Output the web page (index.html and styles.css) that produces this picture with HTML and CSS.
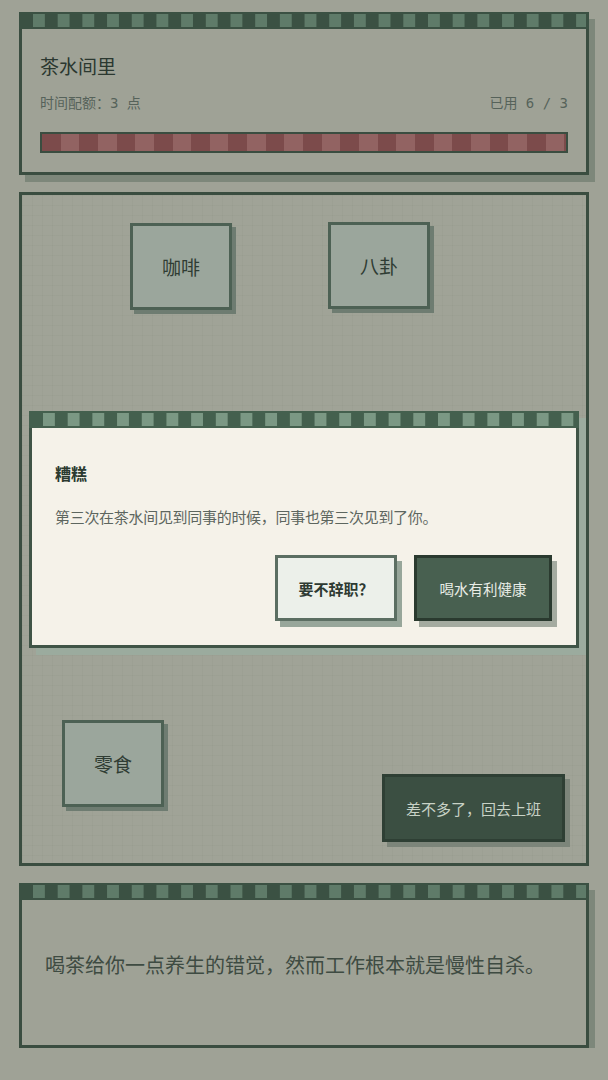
FILE: index.html
```html
<!DOCTYPE html>
<html lang="zh-CN">
<head>
  <meta charset="UTF-8">
  <title>茶水间里</title>
  <link rel="stylesheet" href="styles.css">
</head>
<body>
  <main class="screen">

    <!-- header: room name + time budget -->
    <section class="panel panel-head">
      <div class="strip"></div>
      <div class="panel-body">
        <h1 class="room-title">茶水间里</h1>
        <div class="meta">
          <span>时间配额：3 点</span>
          <span>已用 6 / 3</span>
        </div>
        <div class="meter"></div>
      </div>
    </section>

    <!-- the room itself: things to click are placed around the floor -->
    <section class="room">
      <button class="spot spot-coffee">咖啡</button>
      <button class="spot spot-gossip">八卦</button>
      <button class="spot spot-snack">零食</button>
      <button class="leave">差不多了，回去上班</button>

      <div class="dialog">
        <div class="strip strip-light"></div>
        <div class="dialog-body">
          <h2 class="dialog-title">糟糕</h2>
          <p class="dialog-text">第三次在茶水间见到同事的时候，同事也第三次见到了你。</p>
          <div class="dialog-actions">
            <button class="btn btn-plain">要不辞职？</button>
            <button class="btn btn-dark">喝水有利健康</button>
          </div>
        </div>
      </div>
    </section>

    <!-- narration -->
    <section class="panel panel-foot">
      <div class="strip"></div>
      <p class="narration">喝茶给你一点养生的错觉，然而工作根本就是慢性自杀。</p>
    </section>

  </main>
</body>
</html>
```

FILE: styles.css
```css
:root {
  --bg: #9fa296;
  --ink: #2f3c33;
  --frame: #3a4d40;
  --strip-dark: #3b5143;
  --strip-sq: #5f7b69;
}

* {
  box-sizing: border-box;
}

body {
  margin: 0;
  background: var(--bg);
  font-family: "Noto Sans CJK SC", sans-serif;
  color: var(--ink);
}

.screen {
  width: 608px;
  padding: 12px 19px 0;
  display: flex;
  flex-direction: column;
  gap: 17px;
}

/* framed panels with the film-strip top */
.panel {
  border: 3px solid var(--frame);
  border-top: none;
  background: var(--bg);
  box-shadow: 6px 7px 0 #7d877a;
}

/* squares start 14px in; the content box keeps them off the left edge */
.strip {
  height: 17px;
  margin: 0 -3px;
  padding: 0 3px 0 14px;
  background:
    linear-gradient(90deg, var(--strip-sq) 0 12px, transparent 12px) 0 2px / 24.7px 13px repeat-x content-box,
    var(--strip-dark);
}

.strip-light {
  background:
    linear-gradient(90deg, #7b9884 0 12px, transparent 12px) 0 2px / 24.7px 13px repeat-x content-box,
    #44604e;
}

.panel-body {
  padding: 24px 18px 19px;
}

.room-title {
  margin: 0;
  font-size: 19px;
  line-height: 26px;
  font-weight: normal;
  color: #2b3830;
}

.meta {
  margin-top: 14px;
  display: flex;
  justify-content: space-between;
  font-family: "DejaVu Sans Mono", "Noto Sans CJK SC", monospace;
  font-size: 14px;
  line-height: 20px;
  color: #56625a;
}

.meter {
  margin-top: 19px;
  height: 21px;
  border: 2px solid var(--frame);
  background: repeating-linear-gradient(90deg, #7c4b4b 0 18.6px, #926362 18.6px 37.3px);
}

/* the room floor */
.room {
  position: relative;
  height: 674px;
  border: 3px solid var(--frame);
  background-color: #a0a397;
  background-image:
    linear-gradient(90deg, rgba(70, 80, 70, 0.04) 1px, transparent 1px),
    linear-gradient(rgba(70, 80, 70, 0.04) 1px, transparent 1px);
  background-size: 10px 10px;
}

.spot {
  position: absolute;
  width: 102px;
  height: 87px;
  border: 3px solid #4d6154;
  background: #9ba69c;
  box-shadow: 4px 4px 0 #6e7c71;
  font-family: inherit;
  font-size: 19px;
  color: var(--ink);
  padding: 0;
  cursor: pointer;
}

.spot-coffee { left: 108px; top: 28px; }
.spot-gossip { left: 306px; top: 27px; }
.spot-snack  { left: 40px;  top: 525px; }

.leave {
  position: absolute;
  left: 360px;
  top: 579px;
  width: 183px;
  height: 68px;
  border: 3px solid #2e3f34;
  background: #3b4f42;
  box-shadow: 5px 5px 0 #7c857a;
  font-family: inherit;
  font-size: 15px;
  color: #c8d2c6;
  padding: 0;
  cursor: pointer;
}

/* popup event card */
.dialog {
  position: absolute;
  left: 7px;
  top: 216px;
  width: 550px;
  border: 3px solid #3f5446;
  border-top: none;
  background: #f5f2e9;
  box-shadow: 7px 7px 0 #9bab9e;
}

.dialog-body {
  padding: 34px 24px 24px 23px;
}

.dialog-title {
  margin: 0;
  font-size: 16px;
  line-height: 22px;
  font-weight: bold;
  color: #2b3a30;
}

.dialog-text {
  margin: 22px 0 0;
  font-size: 15px;
  line-height: 22px;
  letter-spacing: -0.3px;
  color: #5d665f;
}

.dialog-actions {
  margin-top: 27px;
  display: flex;
  justify-content: flex-end;
  align-items: center;
  gap: 17px;
}

.btn {
  height: 66px;
  font-family: inherit;
  cursor: pointer;
}

.btn-plain {
  width: 122px;
  border: 3px solid #5b6e62;
  background: #ecf0ea;
  box-shadow: 5px 6px 0 #97a69a;
  font-size: 15px;
  font-weight: bold;
  color: #2e3a32;
}

.btn-dark {
  width: 138px;
  border: 3px solid #2a3a2f;
  background: #486050;
  box-shadow: 5px 6px 0 #a4aba0;
  font-size: 14.5px;
  color: #e9ede6;
}

.panel-foot {
  height: 165px;
}

.narration {
  margin: 0;
  padding: 51px 23px 0;
  font-size: 20px;
  line-height: 28px;
  color: #3e4b42;
}
```
